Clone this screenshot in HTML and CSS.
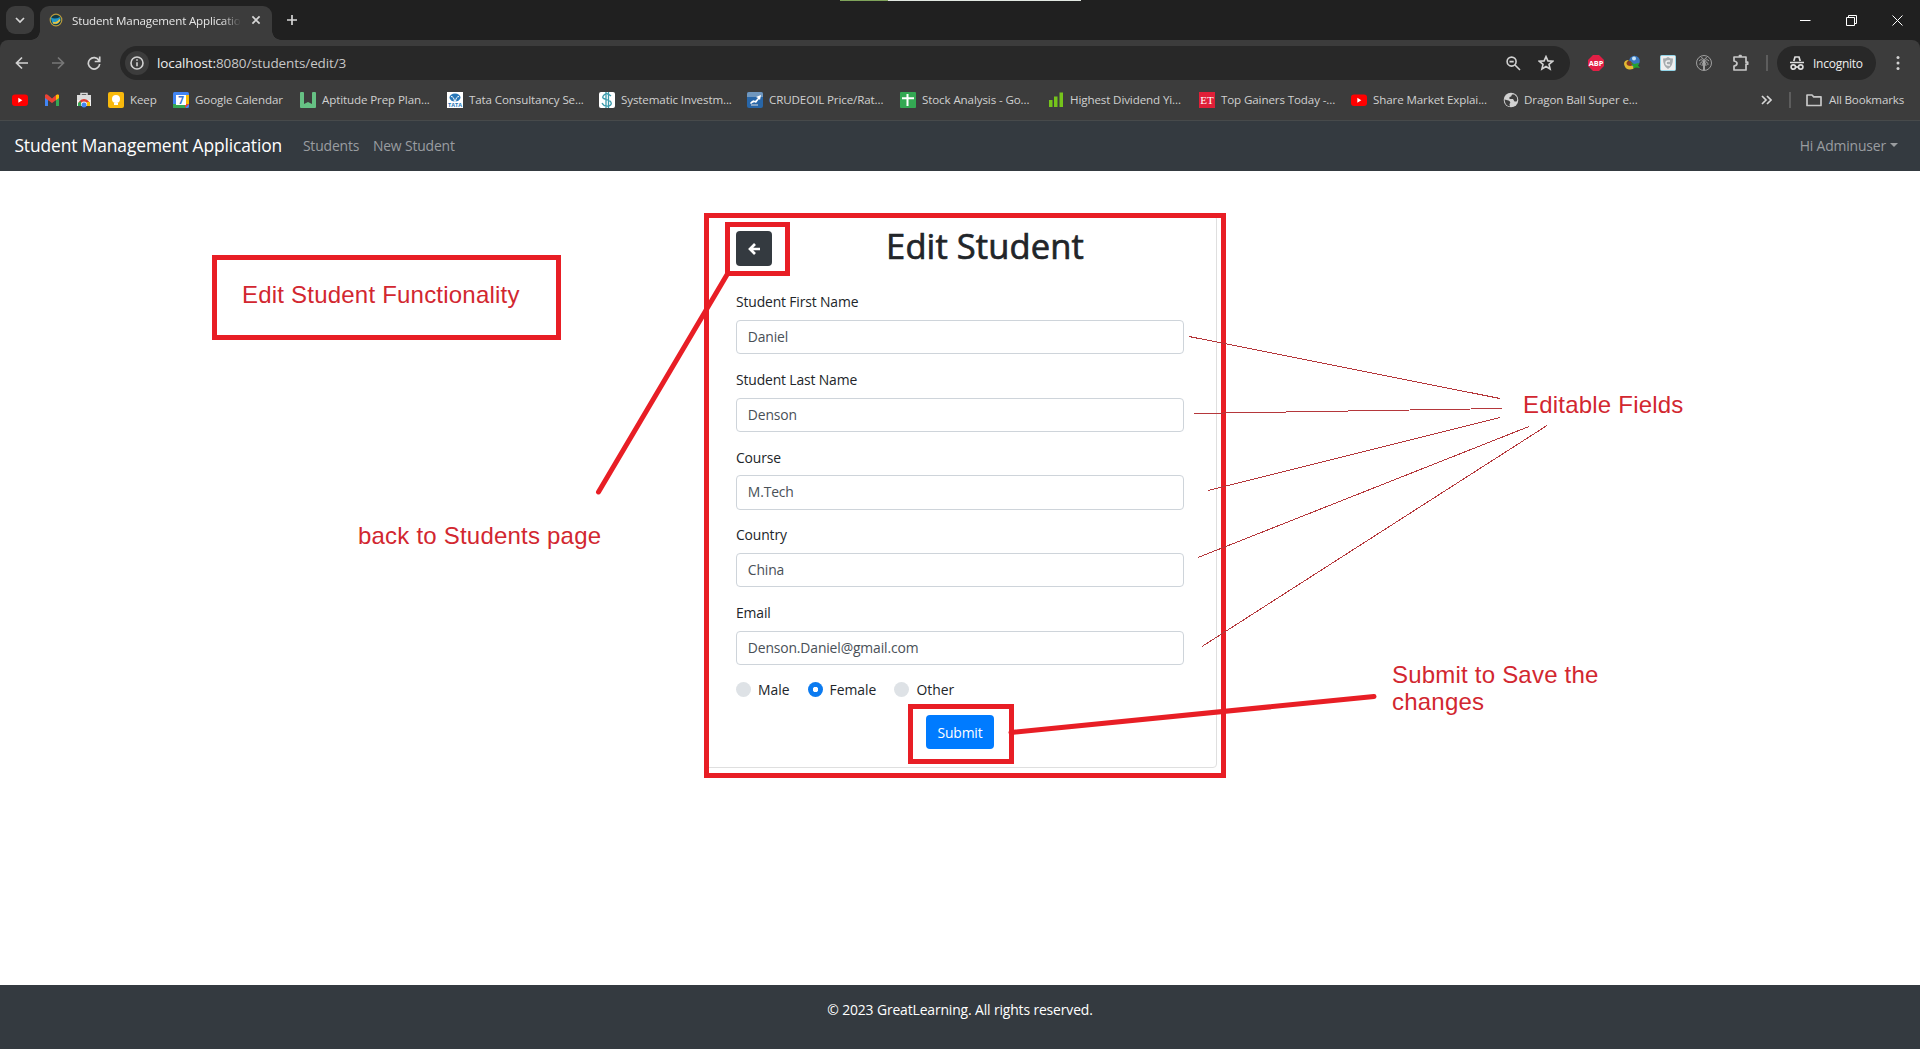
FILE: index.html
```html
<!DOCTYPE html>
<html lang="en">
<head>
<meta charset="utf-8">
<title>Student Management Application</title>
<link rel="stylesheet" href="styles.css">
</head>
<body>
<div class="screen">
  <header class="tabstrip">
    <button class="tab-search"><svg width="12" height="8" viewBox="0 0 12 8"><path d="M2 2l4 4 4-4" class="stroke"/></svg></button>
    <div class="tab">
      <svg class="favicon" width="14" height="14" viewBox="0 0 14 14"><circle cx="7" cy="7" r="5.8" fill="#123a45" stroke="#b99a3c" stroke-width="1.2"/><path d="M1.500 4q4 3 9.500 0 1.500 3-2 6.500-5 2-6-1.500" fill="#2298c9"/><path d="M4 9.500q4 2 7-3" stroke="#f0c53b" stroke-width="1.5" fill="none"/></svg>
      <span class="tab-title">Student Management Applicatio</span>
      <svg class="tab-close" width="10" height="10" viewBox="0 0 10 10"><path d="M1.400 1.400l7.200 7.200M8.600 1.400L1.400 8.600" class="stroke"/></svg>
    </div>
    <svg class="new-tab" width="12" height="12" viewBox="0 0 12 12"><path d="M6 1v10M1 6h10" class="stroke"/></svg>
    <div class="capture-bar"></div>
    <div class="window-controls">
      <svg width="11" height="11" viewBox="0 0 11 11"><path d="M0 5.500h10.500"/></svg>
      <svg width="11" height="11" viewBox="0 0 11 11"><path d="M.5 2.500h8v8h-8zM2.500 2.500v-2h8v8h-2"/></svg>
      <svg width="11" height="11" viewBox="0 0 11 11"><path d="M.5.5l10 10M10.500.5l-10 10"/></svg>
    </div>
  </header>

  <div class="browser">
    <div class="toolbar">
      <svg class="nav-icon" width="14" height="14" viewBox="0 0 14 14"><path d="M13 7H2M7 1.500L1.500 7 7 12.500"/></svg>
      <svg class="nav-icon dim" width="14" height="14" viewBox="0 0 14 14"><path d="M1 7h11M7 1.500L12.500 7 7 12.500"/></svg>
      <svg class="nav-icon" width="14" height="14" viewBox="0 0 14 14"><path d="M12 4.500A5.700 5.700 0 1 0 12.700 8M12.700.5v5h-5"/></svg>
      <div class="omnibox">
        <span class="site-info"><svg width="14" height="14" viewBox="0 0 14 14"><circle cx="7" cy="7" r="6"/><path d="M7 6.200v4M7 3.300v1.500"/></svg></span>
        <span class="url"><b>localhost:</b>8080/students/edit/3</span>
        <svg class="zoom" width="15" height="15" viewBox="0 0 15 15"><circle cx="5.600" cy="5.600" r="4.500"/><path d="M9 9l5 5M3.500 5.600h4.200"/></svg>
        <svg class="star" width="16" height="16" viewBox="0 0 16 16"><path d="M8 1.600l1.900 4.300 4.700.4-3.600 3.100 1.100 4.600L8 11.500 3.900 14 5 9.400 1.400 6.300l4.700-.4z"/></svg>
      </div>
      <div class="extensions">
        <svg width="16" height="16" viewBox="0 0 16 16"><path d="M5 0h6l5 5v6l-5 5H5l-5-5V5z" fill="#e21f45"/><text x="8" y="10.900" class="abp">ABP</text></svg>
        <svg width="16" height="16" viewBox="0 0 16 16"><circle cx="10.500" cy="6" r="5.300" fill="#3976be"/><circle cx="10" cy="3.400" r="2" fill="#c9e4f6"/><path d="M0 9q0-4 5-4-3 2 0 4t6 3q-2 3-6 2.500T0 9z" fill="#e4ba32"/><path d="M2.500 8q0-2 4-2l3 3-3 2q-4 0-4-3z" fill="#8c3a21"/><path d="M6 7l4 2 5-1-1 2.500 2 2.500-4-.5-3 1 .5-2.500z" fill="#24a32d"/></svg>
        <svg width="16" height="16" viewBox="0 0 16 16"><rect x=".5" y=".5" width="15" height="15" rx="1" fill="#eee" stroke="#91d4e8"/><path d="M8 2q2 1.500 5 1.500 0 8-5 10.500-5-2.500-5-10.500Q6 3.500 8 2z" fill="#a6abae"/><path d="M10 6H8a2 2 0 0 0 0 4h2" stroke="#eee" stroke-width="1.500" fill="none"/></svg>
        <svg width="16" height="16" viewBox="0 0 16 16" fill="none" stroke="#aaa" stroke-width=".9"><circle cx="8" cy="8" r="7.500"/><path d="M7.500 15V7h1v8M8 7Q5.500 3 3 6m5 1q2.500-4 5-1M8 7Q4 6 4 10m4-3q4-1 4 3M8 7Q6 7.500 6 11m2-4q2 .5 2 4M5 2.500q2.500 0 3 4 .5-4 3-4"/></svg>
        <svg width="18" height="18" viewBox="0 0 18 18" fill="none" stroke="#c7c7c7" stroke-width="1.700"><path d="M2 3h5.500v-1.500h1.500V3H14v5.200h1.700v2H14V16H2v-4q3-.5 3-2.500T2 7z" stroke-linejoin="round"/></svg>
      </div>
      <i class="divider"></i>
      <div class="incognito"><svg width="16" height="16" viewBox="0 0 16 16"><path d="M4.800 6L6 2h4l1.200 4M1 7.500h14" /><circle cx="4.300" cy="12" r="2.200"/><circle cx="11.700" cy="12" r="2.200"/><path d="M6.500 12h3"/></svg><span>Incognito</span></div>
      <svg class="kebab" width="4" height="16" viewBox="0 0 4 16"><circle cx="2" cy="2.500" r="1.500"/><circle cx="2" cy="8" r="1.500"/><circle cx="2" cy="13.500" r="1.500"/></svg>
    </div>

    <div class="bookmarks">
      <a><svg class="bi" viewBox="0 0 16 16"><rect y="2.500" width="16" height="11.500" rx="3" fill="#f00"/><path d="M6.300 5.800v5l4-2.500z" fill="#fff"/></svg></a>
      <a><svg class="bi" viewBox="0 0 16 16"><path d="M1 3v11h3V6z" fill="#4285f4"/><path d="M12 6v8h3V3z" fill="#34a853"/><path d="M1 3v3l7 5 7-5V3q-1-1-3 0L8 6.500 4 3Q2 1.500 1 3z" fill="#ea4335"/><path d="M12 3v5l3-2V3q-1-1-3 0" fill="#fbbc04"/></svg></a>
      <a><svg class="bi" viewBox="0 0 16 16"><path d="M5 4V1.500h6V4" fill="none" stroke="#ddd" stroke-width="1.500"/><path d="M1 3h14v6H1z" fill="#ddd"/><path d="M1 8h14v6H1z" fill="#f1f1f1"/><path d="M2 13a6 6 0 0 1 12 0h-2.500a3.500 3.500 0 0 0-7 0z" fill="#df3d31"/><path d="M2 14v-3l3-2v5z" fill="#34a853"/><path d="M14 14v-4l-3 0v4z" fill="#fbbc04"/><circle cx="8" cy="13" r="2.500" fill="#4285f4"/></svg></a>
      <a><svg class="bi" viewBox="0 0 16 16"><rect width="16" height="16" rx="2" fill="#f8b90c"/><circle cx="8" cy="7" r="4" fill="#fff"/><path d="M6 11h4v2H6z" fill="#fff"/></svg><span>Keep</span></a>
      <a><svg class="bi" viewBox="0 0 16 16"><rect width="16" height="16" rx="1.500" fill="#4285f4"/><path d="M13 3h3v9h-3z" fill="#fbbc04"/><path d="M0 12h13v4H1q-1 0-1-1z" fill="#34a853"/><path d="M12 16v-4h4z" fill="#ea4335"/><path d="M3 3h10v10H3z" fill="#fff"/><text x="8" y="11.500" class="seven">7</text></svg><span>Google Calendar</span></a>
      <a><svg class="bi" viewBox="0 0 16 16"><path d="M0 1q0-1 1-1h2q1 0 1 1v11l4-2 4 2V1q0-1 1-1h2q1 0 1 1v14q0 1-1 1H1q-1 0-1-1z" fill="#66c184"/></svg><span>Aptitude Prep Plan...</span></a>
      <a><svg class="bi" viewBox="0 0 16 16"><path d="M0 0h16v16H0z" fill="#fff"/><ellipse cx="8" cy="5.500" rx="5.500" ry="4" fill="#2777b8"/><path d="M4 4.500q3 0 3.500 5M12 4.500q-3 0-3.500 5" stroke="#fff" fill="none"/><text x="8" y="14.800" class="tata">TATA</text></svg><span>Tata Consultancy Se...</span></a>
      <a><svg class="bi" viewBox="0 0 16 16"><rect width="16" height="16" rx="2" fill="#fff"/><path d="M12 4Q8 0 5 3t1 4l5 2q3 3-1 5-5 1-7-3M7 0v16M9.500 0v16" stroke="#3a9aab" stroke-width="1.300" fill="none"/></svg><span>Systematic Investm...</span></a>
      <a><svg class="bi" viewBox="0 0 16 16"><rect width="16" height="16" rx="2" fill="#2866a8"/><path d="M0 2q0-2 2-2h12q2 0 2 2v3H0z" fill="#7097be"/><path d="M3 11q3-4 5-2l3-3-2-1 5-2-1 5-1-1-3 4q-2-2-5 1z" fill="#fff"/><path d="M4 13h7" stroke="#ddd"/></svg><span>CRUDEOIL Price/Rat...</span></a>
      <a><svg class="bi" viewBox="0 0 16 16"><rect width="16" height="16" rx="1" fill="#34a853"/><path d="M7.500 2v12M2 6.300h12" stroke="#fff" stroke-width="2"/></svg><span>Stock Analysis - Go...</span></a>
      <a><svg class="bi" viewBox="0 0 16 16"><path d="M1 8h3.500v7H1zM6 4.500h3.500V15H6zM11.500 0.500H15V15h-3.500z" fill="#75c41b"/></svg><span>Highest Dividend Yi...</span></a>
      <a><svg class="bi" viewBox="0 0 16 16"><path d="M0 0h16v16H0z" fill="#df1f38"/><text x="8" y="12" class="et">ET</text></svg><span>Top Gainers Today -...</span></a>
      <a><svg class="bi" viewBox="0 0 16 16"><rect y="2.500" width="16" height="11.500" rx="3" fill="#f00"/><path d="M6.300 5.800v5l4-2.500z" fill="#fff"/></svg><span>Share Market Explai...</span></a>
      <a class="globe"><svg class="bi" viewBox="0 0 16 16"><circle cx="8" cy="8" r="7.300" fill="#d1d1d1"/><path d="M1.500 7.500l4 1q3 1.500 1 3.500l.5 2.500Q3 14 2 10zM9 2.500Q8.500 5 6.500 5v2h3.500l1.500 2.500h2l.8-1.500q-.3-4-3-5.500z" fill="#3c3c3c"/></svg><span>Dragon Ball Super e...</span></a>
      <svg class="more" width="11" height="10" viewBox="0 0 11 10"><path d="M1 1l4 4-4 4M6 1l4 4-4 4" class="stroke"/></svg>
      <i class="divider"></i>
      <a class="all"><svg width="16" height="14" viewBox="0 0 16 14"><path d="M1 2h5l1.700 1.800H15v8.700H1z" fill="none" stroke="#c7c7c7" stroke-width="1.700" stroke-linejoin="round"/></svg><span>All Bookmarks</span></a>
    </div>
  </div>

  <nav class="navbar">
    <a class="brand">Student Management Application</a>
    <a class="link students">Students</a>
    <a class="link new-student">New Student</a>
    <a class="link user">Hi Adminuser</a>
  </nav>

  <main>
    <form class="card">
      <div class="card-head">
        <button type="button" class="back"><svg width="14" height="14" viewBox="0 0 14 14"><path d="M8 2L3 7l5 5M3.500 7H13" fill="none" stroke="#fff" stroke-width="2.700"/></svg></button>
        <h1>Edit Student</h1>
      </div>
      <label>Student First Name</label><div class="field">Daniel</div>
      <label>Student Last Name</label><div class="field">Denson</div>
      <label>Course</label><div class="field">M.Tech</div>
      <label>Country</label><div class="field">China</div>
      <label>Email</label><div class="field">Denson.Daniel@gmail.com</div>
      <div class="radios">
        <span class="radio">Male</span><span class="radio on">Female</span><span class="radio">Other</span>
      </div>
      <button type="button" class="submit">Submit</button>
    </form>
  </main>

  <footer>© 2023 GreatLearning. All rights reserved.</footer>

  <svg class="marks" width="1920" height="1049" viewBox="0 0 1920 1049">
    <path class="boxes" d="M214.500 257.500h344v80h-344zM706.500 215.500h517v560h-517zM727.500 224.500h60v49h-60zM910.500 706.500h101v55h-101z"/>
    <path class="pointer" d="M728 273L598.500 492M1011 732.500L1374 696.500"/>
    <path class="thin" d="M1189 336.500L1500 398.500M1194 413.500L1502 408.500M1208 490.500L1500 417.500M1198 557.500L1529 426.500M1202 646.500L1547 425.500"/>
  </svg>
  <p class="note title-note">Edit Student Functionality</p>
  <p class="note back-note">back to Students page</p>
  <p class="note fields-note">Editable Fields</p>
  <p class="note save-note">Submit to Save the<br>changes</p>
</div>
</body>
</html>
```
FILE: styles.css
```css
* { box-sizing: border-box; }
body { margin: 0; font-family: "Open Sans", "Noto Sans", sans-serif; background: #fff; }
button { border: 0; padding: 0; font: inherit; letter-spacing: inherit; }
svg { display: block; flex: none; }
.screen { position: relative; width: 1920px; height: 1049px; overflow: hidden; display: flex; flex-direction: column; }
.stroke { fill: none; stroke: #d6d6d6; stroke-width: 1.7; }

.tabstrip { height: 40px; background: #202020; display: flex; align-items: center; padding-left: 6px; flex: none; }
.tab-search { width: 28px; height: 28px; border-radius: 9px; background: #3c3c3c; display: grid; place-items: center; }
.tab { position: relative; align-self: flex-end; margin-left: 6px; width: 232px; height: 34px; padding: 0 0 6px 9px; border-radius: 9px 9px 0 0; background: #3c3c3c; display: flex; align-items: center; }
.tab::before, .tab::after { content: ""; position: absolute; bottom: 0; width: 9px; height: 9px; }
.tab::before { left: -9px; background: radial-gradient(circle at 0 0, transparent 8.5px, #3c3c3c 9px); }
.tab::after { right: -9px; background: radial-gradient(circle at 100% 0, transparent 8.5px, #3c3c3c 9px); }
.tab-title { flex: none; width: 170px; margin-left: 9px; margin-right: 9px; font-size: 11.6px; letter-spacing: -.17px; white-space: nowrap; color: #e6e6e6; -webkit-mask-image: linear-gradient(90deg, #000 150px, transparent 169px); mask-image: linear-gradient(90deg, #000 150px, transparent 169px); }
.new-tab { margin-left: 14px; }
.capture-bar { align-self: flex-start; width: 241px; height: 1px; margin-left: 542px; background: linear-gradient(90deg, #7fa35a 48px, #e2e8e2 48px); }
.window-controls { margin-left: auto; margin-right: 17px; display: flex; gap: 35px; }
.window-controls path { fill: none; stroke: #fff; }

.browser { height: 81px; flex: none; background: #3c3c3c; border-bottom: 1px solid #474a4b; border-radius: 8px 8px 0 0; box-shadow: 0 0 0 9px #202020; clip-path: inset(0); }
.toolbar { height: 46px; display: flex; align-items: center; padding: 0 20px 0 15px; }
.nav-icon { margin-right: 22px; fill: none; stroke: #d2d2d2; stroke-width: 1.7; }
.nav-icon.dim { stroke: #777; }
.omnibox { width: 1450px; height: 34px; margin-left: -3px; border-radius: 17px; background: #282828; display: flex; align-items: center; padding: 0 16px 0 5px; }
.omnibox svg { fill: none; stroke: #d2d2d2; stroke-width: 1.6; }
.site-info { width: 24px; height: 24px; border-radius: 50%; background: #3c3c3c; display: grid; place-items: center; }
.url { margin-left: 8px; margin-right: auto; color: #c7c7c7; font-size: 13.5px; letter-spacing: -.11px; }
.url b { font-weight: 400; color: #eee; }
.zoom { margin-right: 17px; }
.extensions { display: flex; align-items: center; gap: 20px; margin-left: 18px; }
.abp { font: 700 7.400px "Open Sans", sans-serif; text-anchor: middle; fill: #fff; }
.divider { width: 2px; height: 16px; background: #5d5d5d; }
.toolbar .divider { margin-left: 16px; }
.incognito { width: 99px; height: 34px; margin-left: 9px; border-radius: 17px; background: #282828; color: #eee; font-size: 12px; letter-spacing: -.25px; display: flex; align-items: center; padding-left: 12px; gap: 8px; }
.incognito svg { fill: none; stroke: #ddd; stroke-width: 1.7; }
.kebab { margin-left: 20px; fill: #d2d2d2; }
.bookmarks { height: 28px; display: grid; align-items: center; padding-left: 12px; grid-template-columns: 32px 32px 32px 65px 127px 147px 152px 148px 153px 148px 151px 152px 152px 258px 28px 17px auto; color: #d0d0d0; font-size: 11.6px; letter-spacing: -.12px; white-space: nowrap; }
.bookmarks a { display: flex; align-items: center; gap: 6px; }
.bookmarks span { margin-top: -2px; }
.bookmarks .globe { gap: 5px; }
.bookmarks .all { gap: 7px; }
.bookmarks .all span { letter-spacing: -.17px; }
.bi { width: 16px; height: 16px; }
.seven { font: 700 10px "Open Sans", sans-serif; text-anchor: middle; fill: #3974d4; letter-spacing: 0; }
.tata { font: 700 5.500px "Open Sans", sans-serif; text-anchor: middle; fill: #2777b8; letter-spacing: 0; }
.et { font: 11px "Liberation Serif", serif; text-anchor: middle; fill: #fff; letter-spacing: 0; }

.navbar { height: 50px; flex: none; background: #343a40; display: flex; align-items: center; padding: 0 22px 2px 14.400px; }
.brand { width: 288.500px; color: #fff; font-size: 17.400px; letter-spacing: -.11px; white-space: nowrap; }
.link { color: #9a9da0; font-size: 13.900px; letter-spacing: -.15px; }
.students { width: 70px; }
.user { margin-left: auto; display: flex; align-items: center; gap: 4px; }
.user::after { content: ""; border: 4px solid transparent; border-top-color: #9a9da0; border-bottom: 0; }

main { flex: 1; padding: 44px 0 0 704px; }
.card { width: 513px; height: 553px; padding: 15px 32px 0 31px; border: 1px solid #dfdfdf; border-radius: 4px; color: #212529; font-size: 13.900px; letter-spacing: -.14px; }
.card-head { display: flex; height: 60.400px; }
.back { width: 36px; height: 35px; border-radius: 4px; background: #343a40; display: grid; place-items: center; }
h1 { flex: 1; margin: -7px 0 0 14px; text-align: center; font-size: 34.500px; line-height: 43px; font-weight: 500; letter-spacing: .1px; -webkit-text-stroke: .7px #212529; }
.card label { display: block; height: 28.800px; line-height: 21.600px; }
.field { height: 34.200px; margin-bottom: 14.600px; border: 1px solid #ced4da; border-radius: 4px; padding: 0 10.800px; line-height: 32px; color: #495057; }
.radios { display: flex; height: 21px; align-items: center; }
.radio { display: flex; align-items: center; gap: 7px; margin-right: 18px; letter-spacing: 0; }
.radio::before { content: ""; width: 15px; height: 15px; border-radius: 50%; background: #dee2e6; }
.radio.on::before { background: radial-gradient(circle, #fff 2.500px, #0c7bf0 3px); }
.submit { display: block; width: 68px; height: 34px; margin: 15px auto 0; border-radius: 4px; background: #007bff; color: #fff; }

footer { height: 64px; flex: none; padding-top: 14px; background: #343a40; color: #fff; text-align: center; font-size: 13.900px; letter-spacing: -.13px; line-height: 21.600px; }

.marks { position: absolute; left: 0; top: 0; fill: none; stroke: #e81e25; }
.boxes, .pointer { stroke-width: 5; stroke-linecap: round; }
.boxes { shape-rendering: crispEdges; }
.thin { stroke: #b5373b; stroke-width: 1; shape-rendering: crispEdges; }
.note { position: absolute; margin: 0; font: 24px/27px "Liberation Sans", Arial, sans-serif; letter-spacing: .21px; color: #d22730; white-space: nowrap; }
.title-note { left: 242px; top: 281px; }
.back-note { left: 358px; top: 522px; }
.fields-note { left: 1523px; top: 391px; }
.save-note { left: 1392px; top: 661px; }
```
